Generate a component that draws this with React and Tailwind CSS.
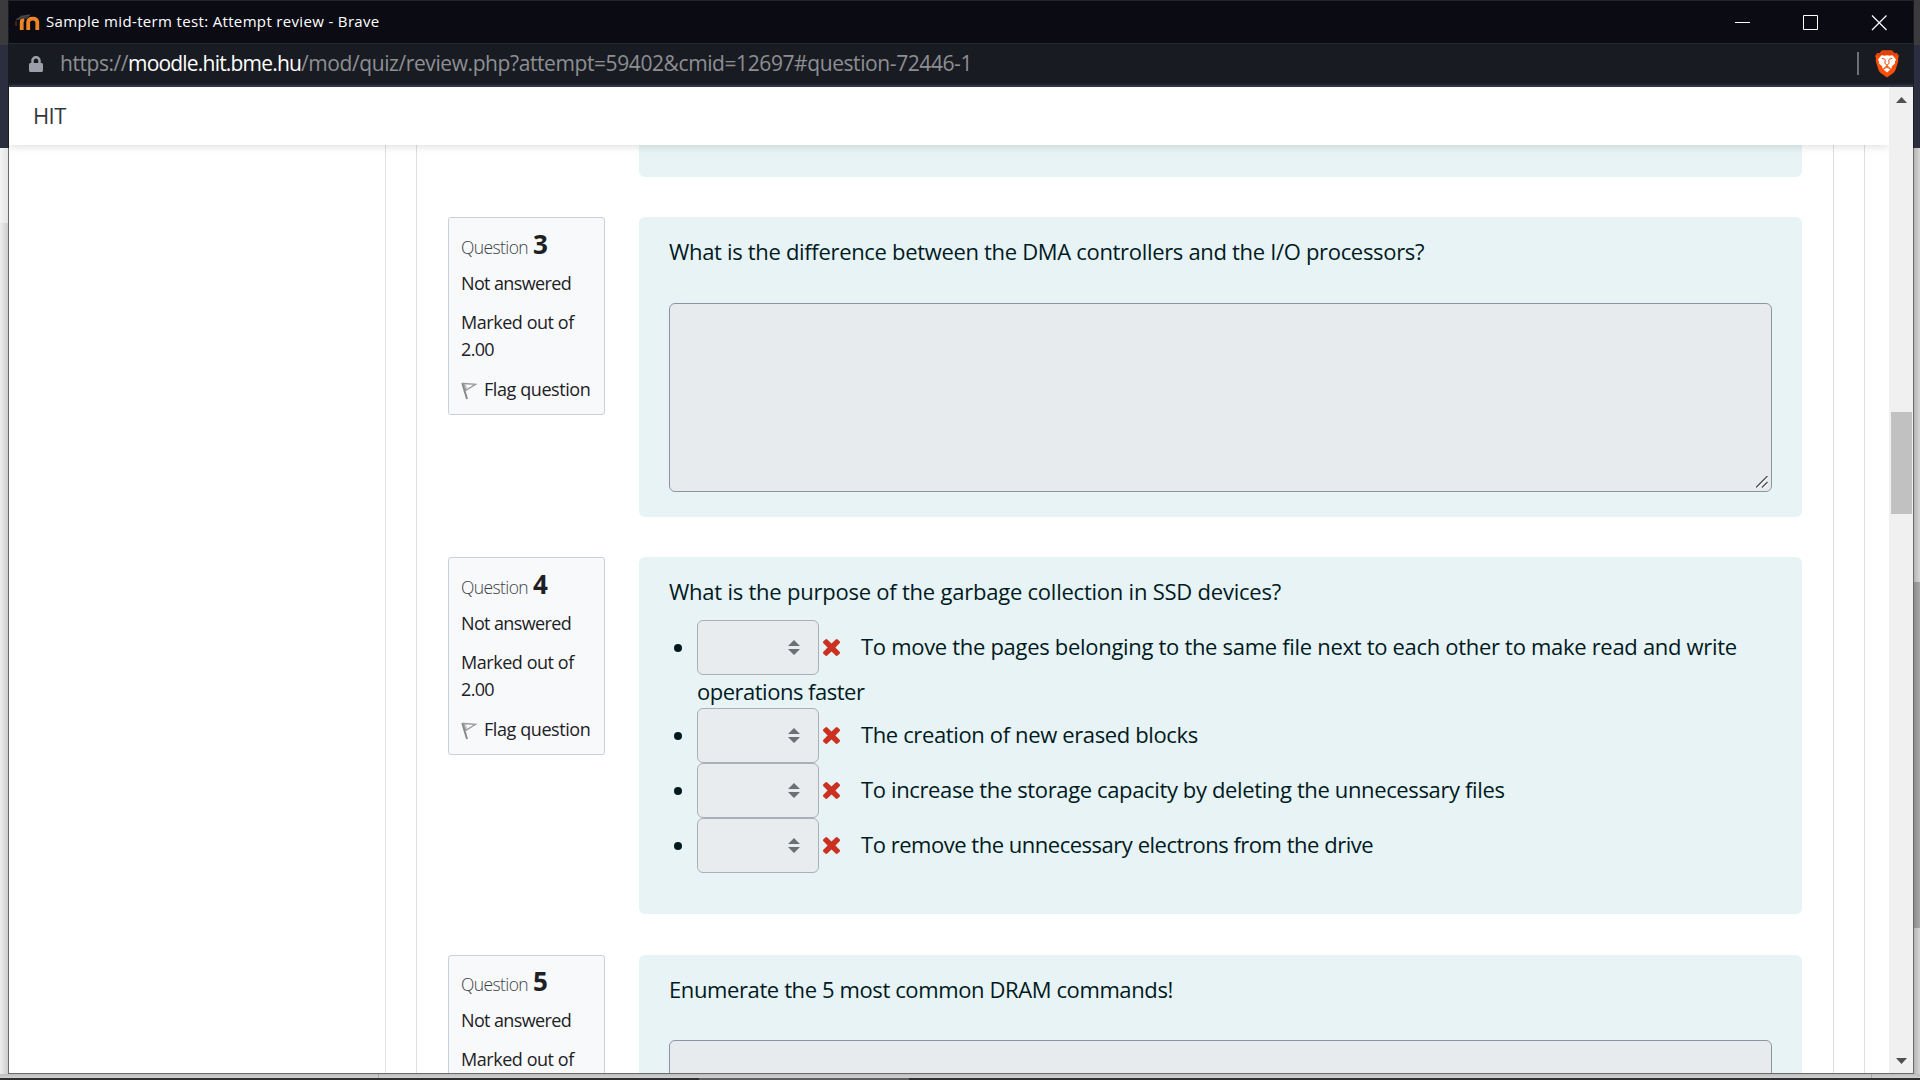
import { FaLock } from "react-icons/fa";

function MoodleIcon() {
  return (
    <svg className="h-[17px] w-[25px] shrink-0" viewBox="0 0 25 17">
      <path d="M1 7v5" stroke="#6b3a22" strokeWidth="1.4" opacity="0.8" />
      <path
        d="M6.700 16V8.500Q6.700 5.500 9.300 5.500M13.200 16V8.300Q13.200 4.600 17.700 4.600Q22.300 4.600 22.300 8.300V16"
        fill="none"
        stroke="#ee8426"
        strokeWidth="3.800"
      />
      <path d="M1 6L6 1.500L15.500 0.500L12 5Q7 3.500 4.500 6Z" fill="#3b3839" />
      <path d="M1 5.500L8 2.500L15 0.800" stroke="#5c5655" strokeWidth="0.700" fill="none" />
    </svg>
  );
}

function BraveIcon() {
  return (
    <svg className="h-[28px] w-[24px]" viewBox="0 0 24 28">
      <path
        d="M7 0.500H17L19.500 3.200L21.800 3L23.800 6L23 8.500L23.300 11L20.500 20Q19.800 22 18 23.300L12 27.600L6 23.300Q4.200 22 3.500 20L0.700 11L1 8.500L0.200 6L2.200 3L4.500 3.200Z"
        fill="#fb4f0a"
      />
      <path d="M7 0.500H17L19.500 3.200L21.800 3L23.800 6L12 4.800L0.200 6L2.200 3L4.500 3.200Z" fill="#e0430a" />
      <path
        d="M6.500 5.200L9.500 5.800L12 5.200L14.500 5.800L17.500 5.200L21 9.500L19.800 12L20 13.500L16.500 16.800L17 18.200L14.800 18.300L12 16.800L9.200 18.300L7 18.200L7.500 16.800L4 13.500L4.200 12L3 9.500Z"
        fill="#fff"
      />
      <path d="M12 17.800L15.400 19.500L12 22.400L8.600 19.500Z" fill="#fff" />
      <path
        d="M6.800 8.400L10.300 9.400M17.200 8.400L13.700 9.400M10.300 10L9.800 13L11.200 14.800H12.800L14.200 13L13.700 10M12 15V16.800M9.300 17.600L12 16L14.700 17.600"
        fill="none"
        stroke="#e8480a"
        strokeWidth="1"
      />
    </svg>
  );
}

function FlagIcon() {
  return (
    <svg className="mt-[6px] h-[18px] w-[16px] shrink-0" viewBox="0 0 16 18" fill="none">
      <path d="M1.300 1L6 17" stroke="#8a8a8a" strokeWidth="2" />
      <path d="M2.500 1.500L14.500 2.300L5 8.200Z" stroke="#9a9a9a" strokeWidth="1.300" />
      <path d="M4.500 3L6.200 7" stroke="#c4c4c4" strokeWidth="1" />
    </svg>
  );
}

function CrossIcon() {
  return (
    <svg className="ml-[4px] h-[17px] w-[17px] shrink-0" viewBox="110 366 1188 1188" fill="#ca3120">
      <path d="M1298 1322q0 40-28 68l-136 136q-28 28-68 28t-68-28l-294-294-294 294q-28 28-68 28t-68-28l-136-136q-28-28-28-68t28-68l294-294-294-294q-28-28-28-68t28-68l136-136q28-28 68-28t68 28l294 294 294-294q28-28 68-28t68 28l136 136q28 28 28 68t-28 68l-294 294 294 294q28 28 28 68z" />
    </svg>
  );
}

function QuestionInfo({ number, padding }) {
  return (
    <div className={`h-[198px] w-[157px] shrink-0 rounded-[3px] border border-[#cad0d7] bg-[#f8f9fa] pl-[12px] text-[18px] leading-[27px] text-[#1d2125] ${padding}`}>
      <h3 className="flex h-[27px] items-baseline whitespace-nowrap">
        <span className="w-[72px] text-[17.5px] font-light tracking-[-0.6px] text-[#3c4248]">Question</span>
        <span className="text-[26px] font-bold leading-[27px]">{number}</span>
      </h3>
      <div className="mt-[12px] tracking-[-0.63px]">Not answered</div>
      <div className="mt-[12px] w-[120px] tracking-[-0.45px]">
        Marked out of <span className="tracking-[-0.65px]">2.00</span>
      </div>
      <div className="mt-[13px] flex tracking-[-0.42px] whitespace-nowrap">
        <FlagIcon />
        <span className="ml-[7px]">Flag question</span>
      </div>
    </div>
  );
}

function Question({ number, title, titleClass, className, infoPadding = "pt-[13px]", children }) {
  return (
    <section className="flex shrink-0">
      <QuestionInfo number={number} padding={infoPadding} />
      <div className={`ml-[34px] w-[1163px] rounded-[6px] bg-[#e7f3f5] px-[30px] pt-[16px] ${className}`}>
        <p className={`h-[36px] whitespace-nowrap leading-[36px] ${titleClass}`}>{title}</p>
        {children}
      </div>
    </section>
  );
}

function Answer({ text, rest, tracking }) {
  return (
    <li>
      <div className="flex h-[55px] items-center">
        <span className="ml-[5px] h-[8px] w-[8px] shrink-0 rounded-full bg-[#001a1e]" />
        <span className="ml-[15px] flex h-[55px] w-[122px] shrink-0 items-center justify-end rounded-[6px] border border-[#a9b0b7] bg-[#e9ecef] pr-[18px]">
          <svg className="h-[15px] w-[12px]" viewBox="0 0 12 15" fill="#6a7076">
            <path d="M0 6L6 0L12 6ZM0 9H12L6 15Z" />
          </svg>
        </span>
        <CrossIcon />
        <span className={`mt-[-2px] ml-[21px] whitespace-nowrap ${tracking}`}>{text}</span>
      </div>
      {rest && <div className="h-[33px] pl-[28px] leading-[33px] tracking-[-0.5px]">{rest}</div>}
    </li>
  );
}

function Essay({ className }) {
  return (
    <div className={`flex h-[189px] items-end justify-end rounded-[6px] border border-[#8f959e] bg-[#e8ebee] p-[3px] ${className}`}>
      <svg className="h-[12px] w-[12px]" viewBox="0 0 12 12" stroke="#4d5156" strokeWidth="1.300">
        <path d="M0 11.500L11.500 0M6 11.500L11.500 6" />
        <path d="M1.500 12L12 1.500M7.500 12L12 7.500" stroke="#fff" strokeWidth="1" />
      </svg>
    </div>
  );
}

export default function App() {
  return (
    <div className="flex h-[1080px] w-[1920px] flex-col overflow-hidden font-['Open_Sans','Noto_Sans',sans-serif]">
      <div className="flex h-[1074px]">
        {/* Window behind, left edge */}
        <div className="flex w-[8px] shrink-0 flex-col">
          <div className="h-[45px] bg-[#3b3b3e]" />
          <div className="h-[103px] bg-[#2b2e3e]" />
          <div className="h-[75px] bg-linear-to-r from-[#f4f4f4] to-[#e4e4e4]" />
          <div className="flex-1 bg-linear-to-r from-[#eeeeee] to-[#cccccc]" />
        </div>
        <div className="flex w-px shrink-0 flex-col">
          <div className="h-[148px] bg-[#1a1b22]" />
          <div className="flex-1 bg-[#6b6b6b]" />
        </div>

        <div className="flex w-[1904px] shrink-0 flex-col">
          <div className="flex h-[43px] shrink-0 items-center border-t border-[#222428] bg-[#0b0b14] pl-[6px]">
            <MoodleIcon />
            <span className="mt-[-1px] ml-[6px] text-[15px] font-medium tracking-[0.34px] text-white">
              Sample mid-term test: Attempt review - Brave
            </span>
            <svg className="mr-[26px] ml-auto h-[17px] w-[152px]" viewBox="0 0 152 17" fill="none" stroke="#fff">
              <path d="M0 8.500H15M68.500 1.500H82.500V15.500H68.500Z" />
              <path d="M137 1.500L151.500 16M151.500 1.500L137 16" strokeWidth="1.200" />
            </svg>
          </div>
          <div className="flex h-[40px] shrink-0 items-center border-t border-[#262930] bg-[#191b22] text-[21px] whitespace-nowrap text-[#8d8f92]">
            <FaLock className="mt-[1px] ml-[20px] h-[16px] w-[14px] text-[#9c9fa9]" />
            <div className="mt-[1px] ml-[17px] flex">
              <span className="w-[68px] tracking-[-0.45px]">https://</span>
              <span className="w-[173px] tracking-[-0.8px] text-white">moodle.hit.bme.hu</span>
              <span className="tracking-[-0.41px]">/mod/quiz/review.php?attempt=59402&amp;cmid=12697#question-72446-1</span>
            </div>
            <div className="mr-[16px] ml-auto h-[23px] w-[2px] bg-[#6e7076]" />
            <div className="mr-[14px]">
              <BraveIcon />
            </div>
          </div>
          <div className="h-[4px] shrink-0 border-t-2 border-b-2 border-t-[#20222a] border-b-[#33354a]" />

          <div className="flex h-[986px] shrink-0">
            <main className="flex w-[1880px] flex-col overflow-hidden bg-white text-[#1d2125]">
              <header className="relative z-10 h-[58px] shrink-0 bg-white pl-[24px] text-[22px] leading-[56px] tracking-[-0.6px] text-[#33383d] shadow-[0_2px_8px_rgba(0,0,0,0.12)]">
                HIT
              </header>
              <div className="flex h-[928px]">
                <div className="w-[377px] border-r border-[#dee2e6]" />
                <div className="w-[30px]" />
                <div className="flex w-[1418px] flex-col border-x border-[#dedfe0] pl-[31px] text-[22px] text-[#001a1e]">
                  <div className="ml-[191px] h-[32px] w-[1163px] shrink-0 rounded-b-[6px] bg-[#e7f3f5]" />
                  <div className="mt-[40px] flex flex-col">
                    <Question
                      number="3"
                      title="What is the difference between the DMA controllers and the I/O processors?"
                      titleClass="tracking-[-0.32px]"
                      className="h-[300px]"
                    >
                      <Essay className="mt-[34px]" />
                    </Question>
                    <div className="h-[40px]" />
                    <Question
                      number="4"
                      title="What is the purpose of the garbage collection in SSD devices?"
                      titleClass="tracking-[-0.23px]"
                      className="h-[357px]"
                    >
                      <ul className="mt-[11px]">
                        <Answer
                          tracking="tracking-[-0.305px]"
                          text="To move the pages belonging to the same file next to each other to make read and write"
                          rest="operations faster"
                        />
                        <Answer tracking="tracking-[-0.37px]" text="The creation of new erased blocks" />
                        <Answer
                          tracking="tracking-[-0.37px]"
                          text="To increase the storage capacity by deleting the unnecessary files"
                        />
                        <Answer
                          tracking="tracking-[-0.48px]"
                          text="To remove the unnecessary electrons from the drive"
                        />
                      </ul>
                    </Question>
                    <div className="h-[41px]" />
                    <Question
                      number="5"
                      title="Enumerate the 5 most common DRAM commands!"
                      titleClass="tracking-[-0.39px]"
                      className="h-[300px]"
                      infoPadding="pt-[12px]"
                    >
                      <Essay className="mt-[33px]" />
                    </Question>
                  </div>
                </div>
                <div className="w-[31px] border-r border-[#dedfe0]" />
              </div>
            </main>

            <div className="flex w-[24px] flex-col items-center bg-[#f0f0f0]">
              <svg className="mt-[10px] ml-[1px] h-[6px] w-[11px]" viewBox="0 0 11 6" fill="#505050">
                <path d="M0 6L5.500 0L11 6Z" />
              </svg>
              <div className="mt-[309px] h-[102px] w-[21px] bg-[#c1c1c1]" />
              <svg className="mt-auto mb-[9px] ml-[1px] h-[6px] w-[11px]" viewBox="0 0 11 6" fill="#505050">
                <path d="M0 0L5.500 6L11 0Z" />
              </svg>
            </div>
          </div>
          <div className="h-px shrink-0 bg-[#6b6b6b]" />
        </div>

        {/* Window behind, right edge */}
        <div className="flex w-px shrink-0 flex-col">
          <div className="h-[148px] bg-[#1a1b22]" />
          <div className="flex-1 bg-[#6b6b6b]" />
        </div>
        <div className="flex w-[6px] shrink-0 flex-col">
          <div className="h-[45px] bg-[#3b3b3e]" />
          <div className="h-[103px] bg-[#2b2e3e]" />
          <div className="h-[434px] bg-linear-to-r from-[#b4b4b4] to-[#d6d6d6]" />
          <div className="h-[346px] bg-linear-to-r from-[#8c8c8c] to-[#a8a8a8]" />
          <div className="flex-1 bg-linear-to-r from-[#b4b4b4] to-[#d6d6d6]" />
        </div>
      </div>
      <div className="flex h-[4px]">
        <div className="w-[379px] border-r border-[#a8a8a8] bg-linear-to-b from-[#bdbdbd] to-[#d2d2d2]" />
        <div className="w-[1493px] border-r border-[#a8a8a8] bg-linear-to-b from-[#bdbdbd] to-[#d2d2d2]" />
        <div className="flex-1 bg-linear-to-b from-[#bdbdbd] to-[#d2d2d2]" />
      </div>
      <div className="flex h-[2px] bg-[#2f2f31]">
        <div className="ml-[699px] w-[210px] bg-[#5c5c5e]" />
      </div>
    </div>
  );
}
